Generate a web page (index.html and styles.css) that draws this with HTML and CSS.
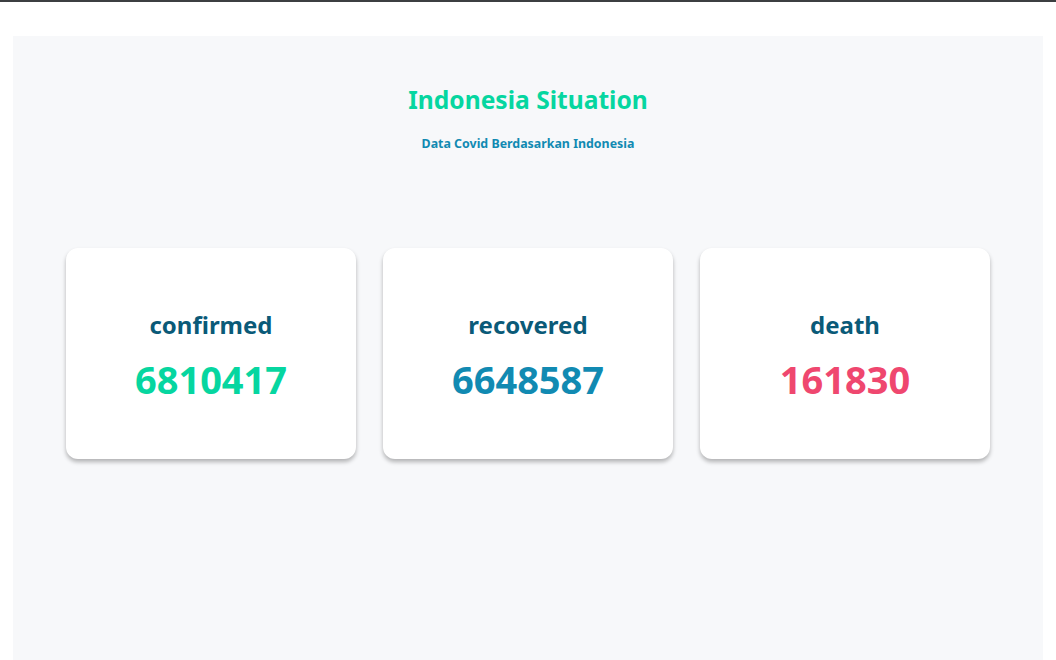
FILE: index.html
```html
<!DOCTYPE html>
<html>
<head>
<meta charset="utf-8">
<link rel="stylesheet" href="styles.css">
</head>
<body>
<div class="topbar"></div>
<main class="panel">
  <header class="heading">
    <h1 class="title">Indonesia Situation</h1>
    <p class="subtitle">Data Covid Berdasarkan Indonesia</p>
  </header>
  <section class="cards">
    <div class="card">
      <h2 class="label">confirmed</h2>
      <p class="value green">6810417</p>
    </div>
    <div class="card">
      <h2 class="label">recovered</h2>
      <p class="value blue">6648587</p>
    </div>
    <div class="card">
      <h2 class="label">death</h2>
      <p class="value red">161830</p>
    </div>
  </section>
</main>
</body>
</html>
```
FILE: styles.css
```css
* { box-sizing: border-box; }
html, body { margin: 0; padding: 0; background: #fff; overflow: hidden; height: 660px; }
body { font-family: "Noto Sans", "Open Sans", sans-serif; }
.topbar { height: 2px; background: #3c3f41; }
.panel {
  margin: 34px 0 0 13px;
  width: 1030px;
  height: 640px;
  background: #f7f8fa;
  padding-top: 48px;
}
.heading { text-align: center; }
.title {
  margin: 0;
  font-size: 24.6px;
  font-weight: 700;
  color: #06d6a0;
  line-height: 32px;
}
.subtitle {
  margin: 20px 0 0;
  font-size: 12.4px;
  font-weight: 700;
  color: #118ab2;
  line-height: 16px;
}
.cards {
  display: flex;
  justify-content: center;
  gap: 27px;
  margin-top: 96px;
}
.card {
  width: 290px;
  height: 211px;
  background: #fff;
  border-radius: 12px;
  box-shadow: 0 3px 4px rgba(0,0,0,0.28);
  display: flex;
  flex-direction: column;
  align-items: center;
  padding-top: 61px;
}
.label {
  margin: 0;
  font-size: 24px;
  font-weight: 700;
  color: #0a5a78;
  line-height: 32px;
}
.value {
  margin: 14px 0 0;
  font-size: 38px;
  font-weight: 700;
  line-height: 48px;
}
.green { color: #06d6a0; }
.blue { color: #118ab2; }
.red { color: #ef476f; }
```
